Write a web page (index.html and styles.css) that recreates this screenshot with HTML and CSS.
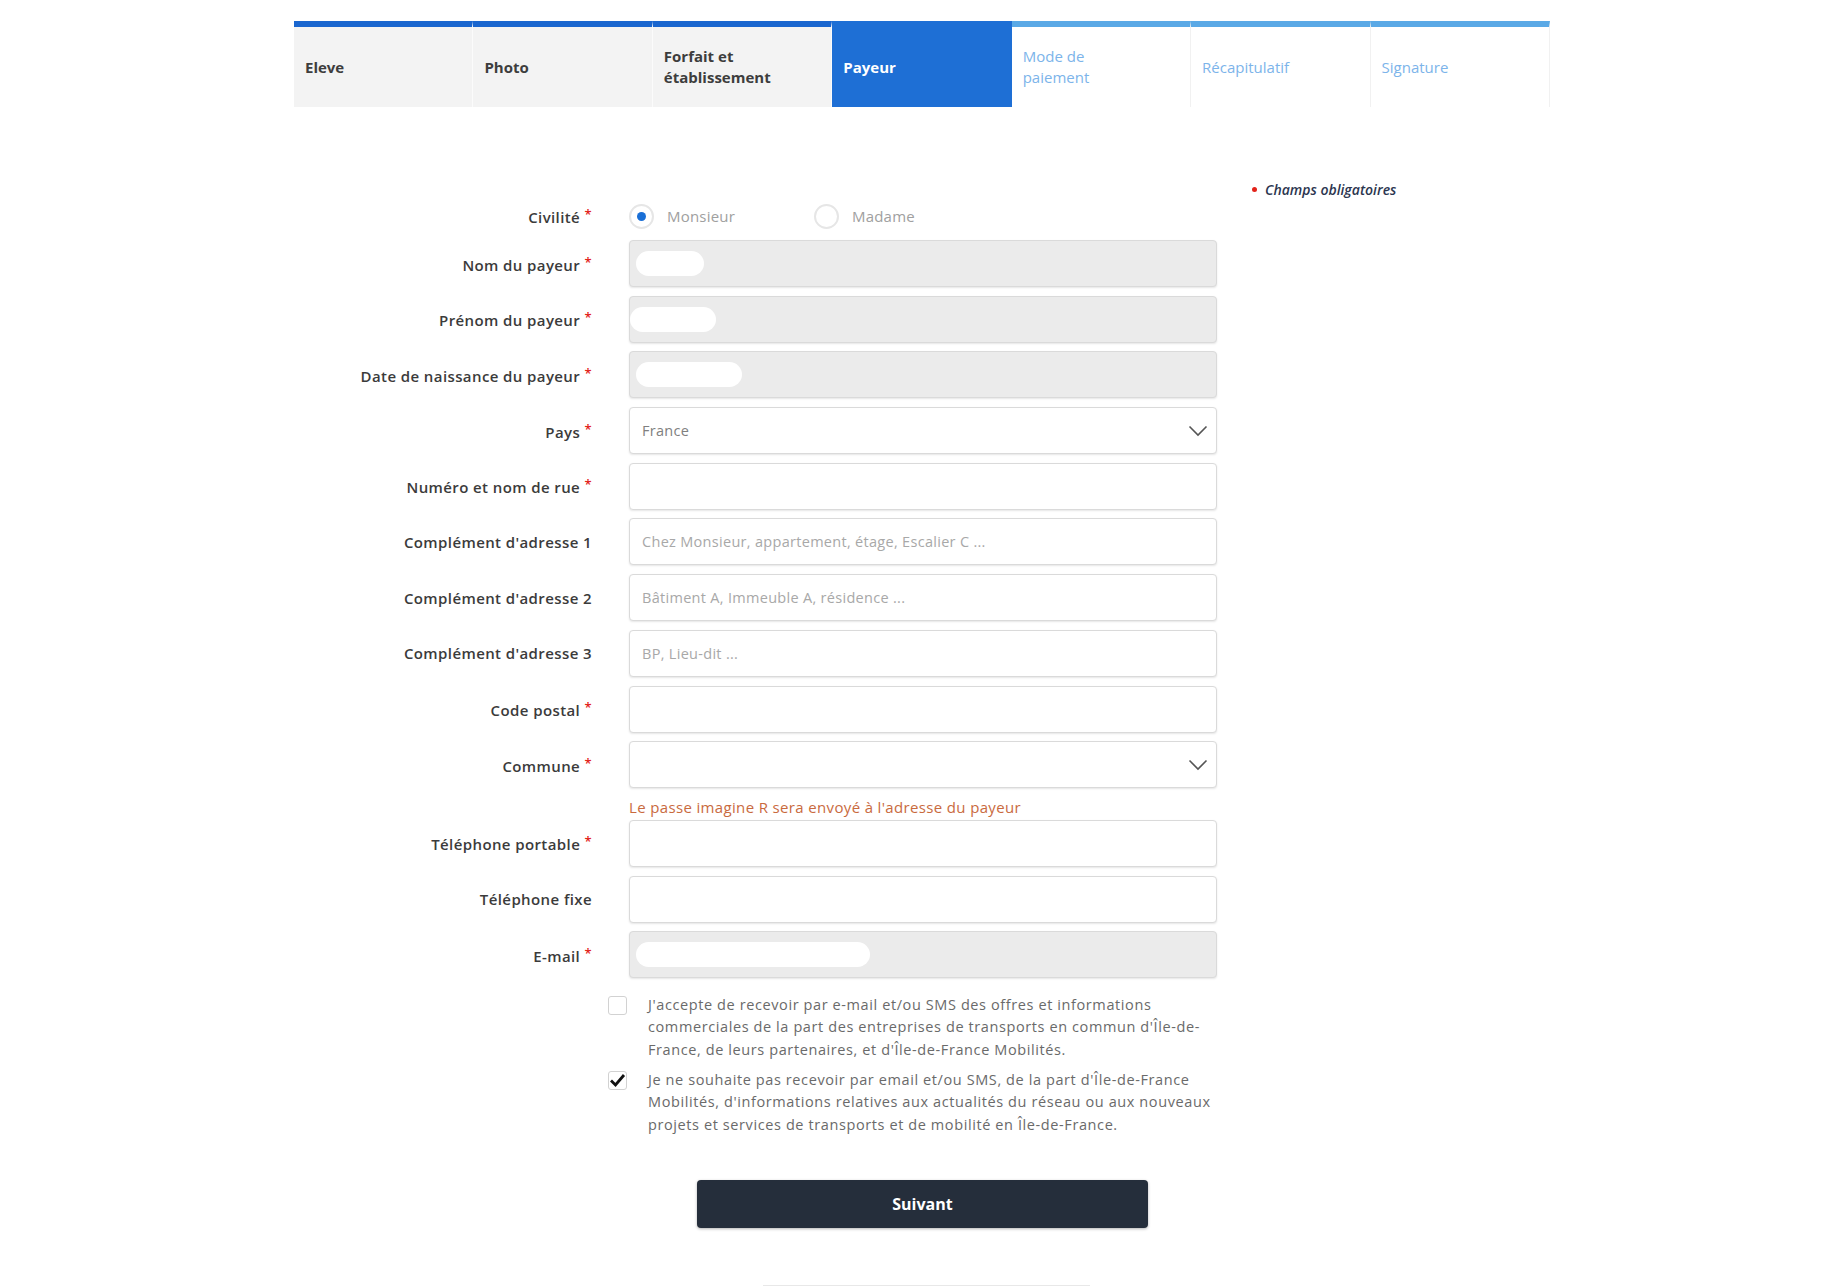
FILE: index.html
```html
<!DOCTYPE html>
<html lang="fr">
<head>
    <meta charset="utf-8">
    <title>Payeur - Demande de passe</title>
    <link rel="stylesheet" href="styles.css">
</head>
<body>
    <div class="page">
        <ul class="steps">
            <li class="step done">Eleve</li>
            <li class="step done">Photo</li>
            <li class="step done">Forfait et établissement</li>
            <li class="step active">Payeur</li>
            <li class="step todo">Mode de<br>paiement</li>
            <li class="step todo">Récapitulatif</li>
            <li class="step todo">Signature</li>
        </ul>

        <form class="payer-form" onsubmit="return false">
            <div class="fields">
                <div class="row row-civ">
                    <label class="row-label">Civilité <span class="req">*</span></label>
                    <div class="radios">
                        <span class="radio checked"><i></i>Monsieur</span>
                        <span class="radio"><i></i>Madame</span>
                    </div>
                </div>

                <div class="row">
                    <label class="row-label">Nom du payeur <span class="req">*</span></label>
                    <div class="field locked"><span class="mask" style="width: 68px"></span></div>
                </div>
                <div class="row">
                    <label class="row-label">Prénom du payeur <span class="req">*</span></label>
                    <div class="field locked"><span class="mask flush" style="width: 86px"></span></div>
                </div>
                <div class="row">
                    <label class="row-label">Date de naissance du payeur <span class="req">*</span></label>
                    <div class="field locked"><span class="mask" style="width: 106px"></span></div>
                </div>
                <div class="row">
                    <label class="row-label">Pays <span class="req">*</span></label>
                    <div class="field select">
                        <span>France</span>
                        <svg width="20" height="12" viewBox="0 0 20 12"><polyline points="1.5,1.5 10,10 18.5,1.5" fill="none" stroke="#555" stroke-width="1.6"/></svg>
                    </div>
                </div>
                <div class="row">
                    <label class="row-label">Numéro et nom de rue <span class="req">*</span></label>
                    <input class="field" type="text">
                </div>
                <div class="row">
                    <label class="row-label">Complément d'adresse 1</label>
                    <input class="field" type="text" placeholder="Chez Monsieur, appartement, étage, Escalier C ...">
                </div>
                <div class="row">
                    <label class="row-label">Complément d'adresse 2</label>
                    <input class="field" type="text" placeholder="Bâtiment A, Immeuble A, résidence ...">
                </div>
                <div class="row">
                    <label class="row-label">Complément d'adresse 3</label>
                    <input class="field" type="text" placeholder="BP, Lieu-dit ...">
                </div>
                <div class="row">
                    <label class="row-label">Code postal <span class="req">*</span></label>
                    <input class="field" type="text">
                </div>
                <div class="row">
                    <label class="row-label">Commune <span class="req">*</span></label>
                    <div class="field select">
                        <span></span>
                        <svg width="20" height="12" viewBox="0 0 20 12"><polyline points="1.5,1.5 10,10 18.5,1.5" fill="none" stroke="#555" stroke-width="1.6"/></svg>
                    </div>
                </div>
                <div class="row row-note">
                    <span></span>
                    <p class="note">Le passe imagine R sera envoyé à l'adresse du payeur</p>
                </div>
                <div class="row">
                    <label class="row-label">Téléphone portable <span class="req">*</span></label>
                    <input class="field" type="text">
                </div>
                <div class="row">
                    <label class="row-label">Téléphone fixe</label>
                    <input class="field" type="text">
                </div>
                <div class="row">
                    <label class="row-label">E-mail <span class="req">*</span></label>
                    <div class="field locked"><span class="mask" style="width: 234px"></span></div>
                </div>

                <div class="consents">
                    <div class="consent">
                        <span class="box"></span>
                        <p>J'accepte de recevoir par e-mail et/ou SMS des offres et informations commerciales de la part des entreprises de transports en commun d'Île-de-France, de leurs partenaires, et d'Île-de-France Mobilités.</p>
                    </div>
                    <div class="consent">
                        <span class="box">
                            <svg width="19" height="19" viewBox="0 0 19 19"><polyline points="3,9.5 7.5,14 16,4" fill="none" stroke="#111" stroke-width="2.8"/></svg>
                        </span>
                        <p>Je ne souhaite pas recevoir par email et/ou SMS, de la part d'Île-de-France Mobilités, d'informations relatives aux actualités du réseau ou aux nouveaux projets et services de transports et de mobilité en Île-de-France.</p>
                    </div>
                </div>

                <button class="btn-next" type="submit">Suivant</button>
            </div>

            <aside class="legend"><span class="dot"></span>Champs obligatoires</aside>
        </form>

        <div class="footer-line"></div>
    </div>
</body>
</html>
```

FILE: styles.css
```css
body {
    margin: 0;
    font-family: "Open Sans", Arial, sans-serif;
    color: #333;
    background: #fff;
}

.page {
    width: 1256px;
    margin: 0 auto;
    padding-top: 21px;
}

/* step tabs */
.steps {
    display: flex;
    list-style: none;
    margin: 0;
    padding: 0;
}

.step {
    flex: 1;
    box-sizing: border-box;
    height: 86px;
    display: flex;
    align-items: center;
    padding: 0 11px;
    border-top: 6px solid #1a66cf;
    border-right: 1px solid #fbfbfb;
    font-size: 15px;
    font-weight: 700;
    line-height: 21px;
}

.step.done {
    background: #f3f3f3;
    color: #3d3d3d;
}

.step.active {
    background: #1e6fd5;
    border-top-color: #1e6fd5;
    border-right-color: #1e6fd5;
    color: #fff;
}

.step.todo {
    background: #fff;
    color: #7cb4ea;
    font-weight: 400;
    border-top-color: #5aa9e6;
    border-right-color: #f1f1f1;
}

/* form */
.payer-form {
    display: flex;
    padding-top: 74px;
}

.fields {
    width: 923px;
    padding-top: 11px;
}

.row {
    display: grid;
    grid-template-columns: 298px 588px;
    column-gap: 37px;
    align-items: center;
    margin-bottom: 8.7px;
}

.row-civ {
    height: 48px;
    margin-bottom: 0;
}

.row-label {
    text-align: right;
    font-size: 15px;
    font-weight: 600;
    letter-spacing: 0.4px;
    color: #3b3b3b;
}

.req {
    color: #e2231a;
    font-size: 13px;
    vertical-align: 4px;
}

.radios {
    display: flex;
    align-items: center;
}

.radio {
    display: flex;
    align-items: center;
    width: 185px;
    font-size: 15px;
    letter-spacing: 0.2px;
    color: #a0a0a0;
}

.radio i {
    box-sizing: border-box;
    width: 25px;
    height: 25px;
    border: 2px solid #e6e6e6;
    border-radius: 50%;
    margin-right: 13px;
    display: flex;
    align-items: center;
    justify-content: center;
}

.radio.checked i::after {
    content: "";
    width: 9px;
    height: 9px;
    border-radius: 50%;
    background: #1a6fd6;
}

.field {
    box-sizing: border-box;
    width: 100%;
    height: 47px;
    margin: 0;
    padding: 0 12px;
    border: 1px solid #dadada;
    border-radius: 4px;
    box-shadow: 0 1px 2px rgba(0, 0, 0, 0.1);
    background: #fff;
    display: flex;
    align-items: center;
    font-family: inherit;
    font-size: 14.5px;
    letter-spacing: 0.3px;
    color: #808080;
    outline: none;
}

.field::placeholder {
    color: #a8a8a8;
}

.field.locked {
    background: #ebebeb;
    padding: 0 6px;
}

.mask {
    height: 25px;
    border-radius: 13px;
    background: #fff;
}

.mask.flush {
    margin-left: -6px;
}

.field.select {
    justify-content: space-between;
    padding-right: 8px;
}

.row-note {
    margin-bottom: 3px;
}

.note {
    margin: 0;
    font-size: 15px;
    letter-spacing: 0.35px;
    line-height: 20px;
    color: #c96a3e;
}

/* opt-in checkboxes */
.consents {
    padding-left: 314px;
    padding-top: 7px;
}

.consent {
    display: flex;
    margin-bottom: 7.5px;
}

.consent .box {
    flex: none;
    box-sizing: border-box;
    width: 19px;
    height: 19px;
    margin-top: 2px;
    margin-right: 21px;
    border: 1px solid #d2d2d2;
    border-radius: 3px;
    position: relative;
}

.consent .box svg {
    position: absolute;
    left: -1px;
    top: -1px;
}

.consent p {
    margin: 0;
    width: 584px;
    font-size: 14.5px;
    letter-spacing: 0.6px;
    line-height: 22.5px;
    color: #6a6a6a;
}

.btn-next {
    display: block;
    width: 451px;
    height: 48px;
    margin: 44px 0 0 403px;
    border: none;
    border-radius: 4px;
    background: #252e3b;
    box-shadow: 0 1px 3px rgba(0, 0, 0, 0.3);
    color: #fff;
    font-family: inherit;
    font-size: 16px;
    font-weight: 700;
    cursor: pointer;
}

.legend {
    margin-left: 35px;
    display: flex;
    align-items: center;
    height: 16px;
    font-size: 14px;
    font-style: italic;
    font-weight: 600;
    color: #2c3650;
}

.legend .dot {
    width: 5px;
    height: 5px;
    border-radius: 50%;
    background: #e2231a;
    margin-right: 8px;
}

.footer-line {
    width: 327px;
    margin: 57px 0 0 469px;
    border-top: 1px solid #e8e8e8;
}
```
